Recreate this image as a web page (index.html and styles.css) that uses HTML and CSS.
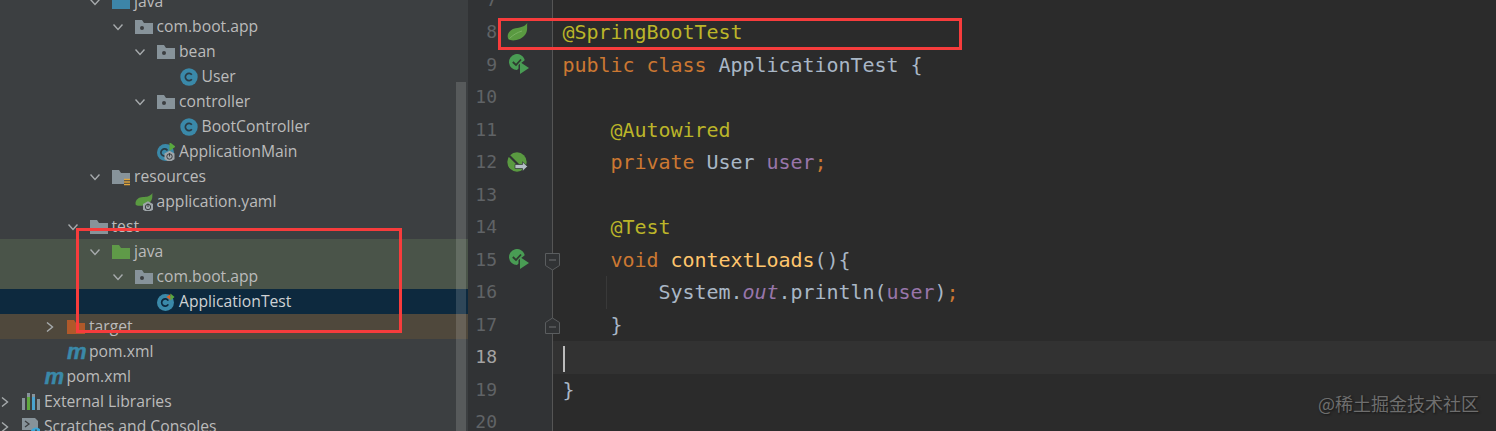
FILE: index.html
```html
<!DOCTYPE html>
<html lang="en">
<head>
<meta charset="utf-8">
<title>ApplicationTest</title>
<link rel="stylesheet" href="styles.css">
</head>
<body>
<svg class="sprite" width="0" height="0" aria-hidden="true">
  <defs>
    <symbol id="down" viewBox="0 0 10 10"><path d="M.5 2.500 5 7.500 9.500 2.500" fill="none" stroke="#a7abad" stroke-width="1.400"/></symbol>
    <symbol id="right" viewBox="0 0 10 10"><path d="M2 .5 7.500 5 2 9.500" fill="none" stroke="#a7abad" stroke-width="1.400"/></symbol>
    <symbol id="folder" viewBox="0 0 18 18"><path d="M0 2h7l2 3h9v11H0z" fill="currentColor"/></symbol>
    <symbol id="package" viewBox="0 0 18 18"><path d="M0 2h7l2 3h9v11H0z" fill="#87939a"/><circle cx="7" cy="10" r="2" fill="#3c3f41"/></symbol>
    <symbol id="resources" viewBox="0 0 18 18"><path d="M0 2h7l2 3h9v6h-6v5H0z" fill="#87939a"/><path d="M12 11.500h6M12 14h6M12 16.500h6" stroke="#e0a53c" stroke-width="1.300"/></symbol>
    <symbol id="klass" viewBox="0 0 18 18"><circle cx="9" cy="9" r="8.700" fill="#3a89a9"/><path d="M11.800 6.800A3.600 3.600 0 1 0 11.800 11.200" fill="none" stroke="#2a3b44" stroke-width="1.700"/></symbol>
    <symbol id="mainclass" viewBox="0 0 18 18"><circle cx="8.500" cy="9.500" r="8.500" fill="#3a89a9"/><path d="M10.500 7.500A3.600 3.600 0 1 0 10.500 11.500" fill="none" stroke="#2a3b44" stroke-width="1.700"/><path d="M12.500-1l6 4.500-6 4.500z" fill="#59a83e"/><path d="M7.500 10.500l5-2.800 5 2.800v5.800l-5 2.800-5-2.800z" fill="#9ea5a9"/><circle cx="12.500" cy="13.500" r="2.700" fill="none" stroke="#3c3f41"/><path d="M12.500 10v3.500" stroke="#3c3f41"/></symbol>
    <symbol id="testclass" viewBox="0 0 18 18"><circle cx="8.500" cy="9.500" r="8.500" fill="#3a89a9"/><path d="M11.300 7.600A3.600 3.600 0 1 0 11.300 11.400" fill="none" stroke="#0d293e" stroke-width="1.700"/><path d="M13.500 1 9.500 4 13.500 7z" fill="#d8622b"/><path d="M13.500.5 17.500 4 13.500 7.500z" fill="#59a83e"/></symbol>
    <symbol id="yaml" viewBox="0 0 18 18"><path d="M17.500 0c-.5 3 .5 5-1.500 8C13.500 12.500 5 14 .8 12 -.5 8 3 4 8 4 12 4 15 3.500 17.500 0z" fill="#5a9a41"/><path d="M8 11l5-2.800 5 2.800v5.800l-5 2.800-5-2.800z" fill="#9ea5a9"/><circle cx="13" cy="14" r="2.700" fill="none" stroke="#3c3f41"/><path d="M13 10.500v3.500" stroke="#3c3f41"/></symbol>
    <symbol id="libs" viewBox="0 0 18 18"><path d="M0 5h3v12H0zM15 6h3v11h-3z" fill="#87939a"/><path d="M5 0h3v4H5z" fill="#87939a"/><path d="M5 4h3v13H5z" fill="#5fa83e"/><path d="M10 1h3v16h-3z" fill="#87939a"/><path d="M10 4h3v13h-3z" fill="#4aa3d0"/></symbol>
    <symbol id="scratch" viewBox="0 0 18 18"><path d="M0 0h13l3 3v9H0z" fill="#87939a"/><path d="M3 3l4 3-4 3" fill="none" stroke="#3c3f41" stroke-width="1.300"/><circle cx="14" cy="15" r="5.500" fill="#3ba7d9"/><path d="M14 11.500v5" stroke="#3c3f41" stroke-width="1.400"/></symbol>
    <symbol id="leaf" viewBox="0 0 21 18"><path d="M20.300 0c-.6 3.500.8 7.500-2 11.500C14.800 16.800 5.500 19 1.500 16.300-1 12 2.500 6.300 8.500 5.200 13 4.500 17.500 4 20.300 0z" fill="#5a9a41"/><path d="M2.500 15.500C6 12 10 9.500 15 8" fill="none" stroke="#7db365" stroke-width=".9"/></symbol>
    <symbol id="runtest" viewBox="0 0 20 20"><path d="M15.500 5.200A8 8 0 1 0 8 16l1.500-1.500V11l6-4.500z" fill="#499c54"/><path d="M3.800 8 7 11 12 5.500" fill="none" stroke="#2f3a30" stroke-width="1.800"/><path d="M11 8l9 6-9 6z" fill="#499c54"/></symbol>
    <symbol id="autowired" viewBox="0 0 21 20"><circle cx="10" cy="10" r="9.700" fill="#5a9a41"/><path d="M2 3.500 13.500 15" stroke="#313335" stroke-width="2.200"/><path d="M8 12.500h7.500V9.800l5 4.700-5 4.700v-2.700H8z" fill="#b4bec5" stroke="#313335" stroke-width=".7"/></symbol>
  </defs>
</svg>

<div class="app">
  <aside class="tree">
    <ul class="rows">
      <li class="row lvl4"><svg class="tog"><use href="#down"/></svg><svg class="ico blue"><use href="#folder"/></svg><span>java</span></li>
      <li class="row lvl5"><svg class="tog"><use href="#down"/></svg><svg class="ico"><use href="#package"/></svg><span>com.boot.app</span></li>
      <li class="row lvl6"><svg class="tog"><use href="#down"/></svg><svg class="ico"><use href="#package"/></svg><span>bean</span></li>
      <li class="row lvl7"><i class="tog"></i><svg class="ico"><use href="#klass"/></svg><span>User</span></li>
      <li class="row lvl6"><svg class="tog"><use href="#down"/></svg><svg class="ico"><use href="#package"/></svg><span>controller</span></li>
      <li class="row lvl7"><i class="tog"></i><svg class="ico"><use href="#klass"/></svg><span>BootController</span></li>
      <li class="row lvl6"><i class="tog"></i><svg class="ico"><use href="#mainclass"/></svg><span>ApplicationMain</span></li>
      <li class="row lvl4"><svg class="tog"><use href="#down"/></svg><svg class="ico"><use href="#resources"/></svg><span>resources</span></li>
      <li class="row lvl5"><i class="tog"></i><svg class="ico"><use href="#yaml"/></svg><span>application.yaml</span></li>
      <li class="row lvl3"><svg class="tog"><use href="#down"/></svg><svg class="ico grey"><use href="#folder"/></svg><span>test</span></li>
      <li class="row lvl4 testroot"><svg class="tog"><use href="#down"/></svg><svg class="ico green"><use href="#folder"/></svg><span>java</span></li>
      <li class="row lvl5 testroot"><svg class="tog"><use href="#down"/></svg><svg class="ico"><use href="#package"/></svg><span>com.boot.app</span></li>
      <li class="row lvl6 selected"><i class="tog"></i><svg class="ico"><use href="#testclass"/></svg><span>ApplicationTest</span></li>
      <li class="row lvl2 excluded"><svg class="tog"><use href="#right"/></svg><svg class="ico orange"><use href="#folder"/></svg><span>target</span></li>
      <li class="row lvl2"><i class="tog"></i><b class="maven">m</b><span>pom.xml</span></li>
      <li class="row lvl1"><i class="tog"></i><b class="maven">m</b><span>pom.xml</span></li>
      <li class="row lvl0"><svg class="tog"><use href="#right"/></svg><svg class="ico"><use href="#libs"/></svg><span>External Libraries</span></li>
      <li class="row lvl0"><svg class="tog"><use href="#right"/></svg><svg class="ico"><use href="#scratch"/></svg><span>Scratches and Consoles</span></li>
    </ul>
    <div class="scrollbar"></div>
    <div class="redbox redbox-tree"></div>
  </aside>

  <main class="editor">
    <div class="line"><div class="gutter"><span class="num">7</span></div><code class="code"></code></div>
    <div class="line"><div class="gutter"><span class="num">8</span><svg class="gi gi-leaf"><use href="#leaf"/></svg></div><code class="code"><span class="ann">@SpringBootTest</span></code></div>
    <div class="line"><div class="gutter"><span class="num">9</span><svg class="gi gi-run"><use href="#runtest"/></svg></div><code class="code"><span class="kw">public class</span> ApplicationTest {</code></div>
    <div class="line"><div class="gutter"><span class="num">10</span></div><code class="code"></code></div>
    <div class="line"><div class="gutter"><span class="num">11</span></div><code class="code">    <span class="ann">@Autowired</span></code></div>
    <div class="line"><div class="gutter"><span class="num">12</span><svg class="gi gi-auto"><use href="#autowired"/></svg></div><code class="code">    <span class="kw">private</span> User <span class="field">user</span><span class="kw">;</span></code></div>
    <div class="line"><div class="gutter"><span class="num">13</span></div><code class="code"></code></div>
    <div class="line"><div class="gutter"><span class="num">14</span></div><code class="code">    <span class="ann">@Test</span></code></div>
    <div class="line"><div class="gutter"><span class="num">15</span><svg class="gi gi-run"><use href="#runtest"/></svg><svg class="fold fold-open" viewBox="0 0 15 18"><path d="M.5.500h14v12l-7 4.500-7-4.500z" fill="#313335" stroke="#5a5d5f"/><path d="M4 7h7" stroke="#6e7173"/></svg></div><code class="code">    <span class="kw">void</span> <span class="fn">contextLoads</span>(){</code></div>
    <div class="line"><div class="gutter"><span class="num">16</span></div><code class="code">        System.<span class="static">out</span>.println(<span class="field">user</span>)<span class="kw">;</span></code><i class="guide"></i></div>
    <div class="line"><div class="gutter"><span class="num">17</span><svg class="fold fold-close" viewBox="0 0 15 18"><path d="M.5 16.500h14v-11l-7-4.500-7 4.500z" fill="#313335" stroke="#5a5d5f"/><path d="M4 10h7" stroke="#6e7173"/></svg></div><code class="code">    }</code></div>
    <div class="line current"><div class="gutter"><span class="num">18</span></div><code class="code"><i class="caret"></i></code></div>
    <div class="line"><div class="gutter"><span class="num">19</span></div><code class="code">}</code></div>
    <div class="line"><div class="gutter"><span class="num">20</span></div><code class="code"></code></div>
    <div class="redbox redbox-code"></div>
    <div class="watermark">@稀土掘金技术社区</div>
  </main>
</div>
</body>
</html>
```

FILE: styles.css
```css
* { box-sizing: border-box; }
html, body { margin: 0; height: 431px; overflow: hidden; background: #2b2b2b; }
.sprite { position: absolute; }

.app { display: flex; height: 431px; overflow: hidden; }

/* project tree */
.tree {
  position: relative;
  flex: 0 0 468px;
  background: #3c3f41;
  color: #bbbbbb;
  font: 15.7px/25px "Open Sans", "Noto Sans", sans-serif;
  overflow: hidden;
}
.rows { list-style: none; margin: -11px 0 0; padding: 0; }
.row { display: flex; align-items: center; height: 25px; white-space: nowrap; }
.lvl0 { padding-left: 0; }
.lvl1 { padding-left: 22.5px; }
.lvl2 { padding-left: 45px; }
.lvl3 { padding-left: 67.5px; }
.lvl4 { padding-left: 90px; }
.lvl5 { padding-left: 112.5px; }
.lvl6 { padding-left: 135px; }
.lvl7 { padding-left: 157.5px; }
.tog { flex: 0 0 10px; width: 10px; height: 10px; margin-right: 12px; }
.ico { flex: 0 0 18px; width: 18px; height: 18px; margin-right: 4px; overflow: visible; }
.blue { color: #3d85a8; }
.grey { color: #87939a; }
.green { color: #5f9a48; }
.orange { color: #b0592a; }
.maven {
  flex: 0 0 18px; width: 18px; margin-right: 4px;
  font: italic bold 22px/25px "Liberation Sans", sans-serif;
  color: #3a89a9;
  -webkit-text-stroke: .5px #3a89a9;
  overflow: visible;
}
.testroot { background: #4a5449; }
.selected { background: #0d293e; color: #cfd2d4; }
.excluded { background: #4f483c; }
.scrollbar {
  position: absolute; left: 456px; top: 82px; bottom: 0; width: 10px;
  background: rgba(255, 255, 255, .14);
}

/* editor */
.editor { position: relative; flex: 1; min-width: 0; background: #2b2b2b; overflow: hidden; }
.line { position: relative; display: flex; height: 32.5px; }
.line:first-child { margin-top: -16.5px; }
.gutter {
  position: relative;
  flex: 0 0 85px;
  background: #313335;
  border-right: 1px solid #555555;
}
.num {
  display: block; width: 29px; text-align: right;
  font: 18px/32.5px "DejaVu Sans Mono", monospace;
  color: #606366;
}
.code {
  flex: 1; padding-left: 9.5px;
  font: 20px/32.5px "DejaVu Sans Mono", monospace;
  letter-spacing: -.04px;
  color: #a9b7c6;
  white-space: pre;
}
.current .code { background: #323232; }
.current .num { color: #a4a3a3; }
.ann { color: #bbb529; }
.kw { color: #cc7832; }
.field { color: #9876aa; }
.fn { color: #ffc66d; }
.static { color: #9876aa; font-style: italic; }
.caret { display: inline-block; width: 2px; height: 26px; background: #bbbbbb; vertical-align: middle; }
.guide { position: absolute; left: 138px; top: 0; width: 1px; height: 100%; background: #393939; }

.gi { position: absolute; overflow: visible; }
.gi-leaf { left: 39px; top: 7px; width: 21px; height: 18px; }
.gi-run { left: 41px; top: 5.5px; width: 20px; height: 20px; }
.gi-auto { left: 39px; top: 6px; width: 21px; height: 20px; }
.fold { position: absolute; left: 77px; width: 15px; height: 18px; z-index: 1; }
.fold-open { top: 9.5px; }
.fold-close { top: 8px; }

/* annotation overlays */
.redbox { position: absolute; border: 3px solid #f73c3c; z-index: 2; pointer-events: none; }
.redbox-tree { left: 76px; top: 228px; width: 326px; height: 105px; }
.redbox-code { left: 30px; top: 18px; width: 464px; height: 32px; }
.watermark {
  position: absolute; left: 850px; top: 391px;
  font: 18px/24px "Noto Sans CJK SC", sans-serif;
  color: #6e6e6e;
  text-shadow: 1px 1px 2px #151515;
  white-space: nowrap;
}
```
